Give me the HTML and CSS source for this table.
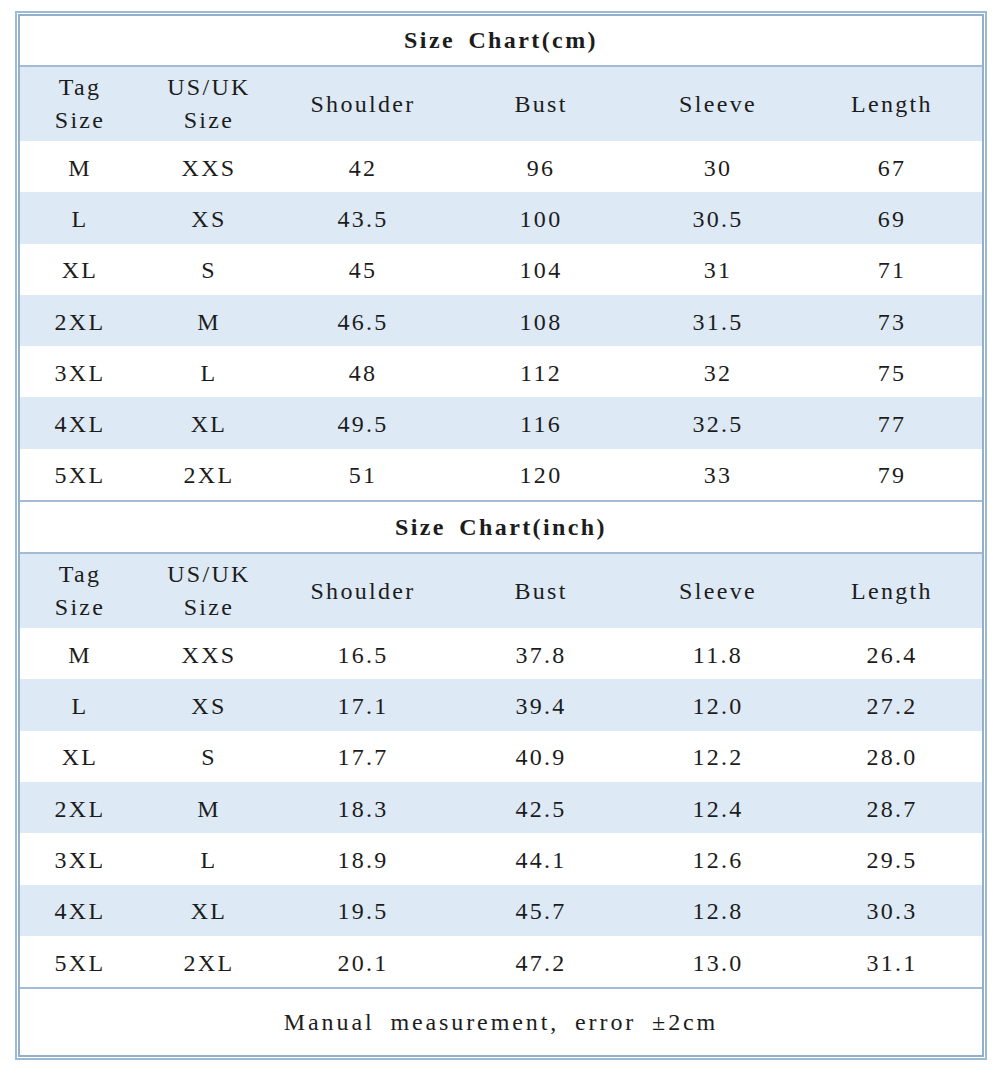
FILE: index.html
```html
<!DOCTYPE html>
<html>
<head>
<meta charset="utf-8">
<link rel="stylesheet" href="styles.css">
</head>
<body>
<div class="frame">
  <div class="inner">
    <div class="title">Size Chart(cm)</div>
    <div class="row head"><div>Tag<br>Size</div><div>US/UK<br>Size</div><div>Shoulder</div><div>Bust</div><div>Sleeve</div><div>Length</div></div>
    <div class="row"><div>M</div><div>XXS</div><div>42</div><div>96</div><div>30</div><div>67</div></div>
    <div class="row blue"><div>L</div><div>XS</div><div>43.5</div><div>100</div><div>30.5</div><div>69</div></div>
    <div class="row"><div>XL</div><div>S</div><div>45</div><div>104</div><div>31</div><div>71</div></div>
    <div class="row blue"><div>2XL</div><div>M</div><div>46.5</div><div>108</div><div>31.5</div><div>73</div></div>
    <div class="row"><div>3XL</div><div>L</div><div>48</div><div>112</div><div>32</div><div>75</div></div>
    <div class="row blue"><div>4XL</div><div>XL</div><div>49.5</div><div>116</div><div>32.5</div><div>77</div></div>
    <div class="row last"><div>5XL</div><div>2XL</div><div>51</div><div>120</div><div>33</div><div>79</div></div>
    <div class="title title2">Size Chart(inch)</div>
    <div class="row head"><div>Tag<br>Size</div><div>US/UK<br>Size</div><div>Shoulder</div><div>Bust</div><div>Sleeve</div><div>Length</div></div>
    <div class="row"><div>M</div><div>XXS</div><div>16.5</div><div>37.8</div><div>11.8</div><div>26.4</div></div>
    <div class="row blue"><div>L</div><div>XS</div><div>17.1</div><div>39.4</div><div>12.0</div><div>27.2</div></div>
    <div class="row"><div>XL</div><div>S</div><div>17.7</div><div>40.9</div><div>12.2</div><div>28.0</div></div>
    <div class="row blue"><div>2XL</div><div>M</div><div>18.3</div><div>42.5</div><div>12.4</div><div>28.7</div></div>
    <div class="row"><div>3XL</div><div>L</div><div>18.9</div><div>44.1</div><div>12.6</div><div>29.5</div></div>
    <div class="row blue"><div>4XL</div><div>XL</div><div>19.5</div><div>45.7</div><div>12.8</div><div>30.3</div></div>
    <div class="row last"><div>5XL</div><div>2XL</div><div>20.1</div><div>47.2</div><div>13.0</div><div>31.1</div></div>
    <div class="foot">Manual measurement, error ±2cm</div>
  </div>
</div>
</body>
</html>
```

FILE: styles.css
```css
html, body {
  margin: 0;
  padding: 0;
  background: #ffffff;
}
body {
  font-family: "Liberation Serif", "DejaVu Serif", serif;
  font-size: 24px;
  letter-spacing: 2.3px;
  color: #1c1c1c;
}
.frame {
  margin: 11px 0 0 15px;
  width: 966px;
  border: 2px solid #9db9d3;
  padding: 1px;
  background: #ffffff;
}
.inner {
  border: 2px solid #93b0cb;
  width: 962px;
}
.title {
  height: 49px;
  display: flex;
  align-items: center;
  justify-content: center;
  font-weight: bold;
  letter-spacing: 2.4px;
  word-spacing: 5px;
  border-bottom: 2px solid #a2bcd5;
}
.title2 {
  height: 50px;
}
.row {
  display: grid;
  grid-template-columns: 120px 138px 170px 186px 168px 180px;
  height: 51.3px;
  box-sizing: border-box;
  padding-top: 3px;
}
.row > div {
  display: flex;
  align-items: center;
  justify-content: center;
  text-align: center;
}
.row.head {
  height: 74px;
  padding-top: 0;
  line-height: 33px;
  background: #dde9f5;
}
.row.blue {
  background: #dde9f5;
}
.row.last {
  border-bottom: 2px solid #a2bcd5;
  height: 53.3px;
}
.foot {
  height: 66px;
  display: flex;
  align-items: center;
  justify-content: center;
  letter-spacing: 2.9px;
  word-spacing: 7px;
}
```
